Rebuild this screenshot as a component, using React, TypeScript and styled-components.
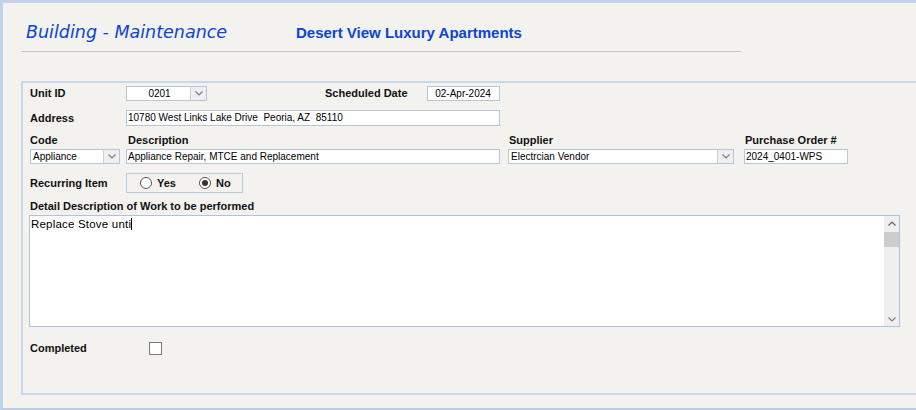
import styled, { createGlobalStyle } from "styled-components";

const GlobalStyle = createGlobalStyle`
  html, body {
    margin: 0;
    padding: 0;
    background: #f3f2ee;
  }
  * {
    box-sizing: border-box;
  }
`;

const Page = styled.div`
  width: 916px;
  height: 410px;
  background: #f3f2ee;
  border-top: 3px solid #c2d4ec;
  border-left: 3px solid #c2d4ec;
  border-bottom: 2px solid #bccde3;
  overflow: hidden;
  font-family: "Liberation Sans", Arial, sans-serif;
  font-size: 11px;
  color: #111;
`;

const Header = styled.div`
  display: flex;
  align-items: baseline;
  padding: 19px 0 0 23px;
  height: 39px;
`;

const Title = styled.div`
  width: 270px;
  font-family: "DejaVu Sans", Verdana, sans-serif;
  font-style: italic;
  font-size: 17.5px;
  line-height: 20px;
  color: #0b44d6;
`;

const Subtitle = styled.div`
  font-weight: bold;
  font-size: 15px;
  line-height: 20px;
  color: #0b44d6;
`;

const Rule = styled.div`
  margin: 9px 0 0 18px;
  width: 720px;
  height: 1px;
  background: #c9c7bd;
`;

const Group = styled.div`
  margin: 29px 0 0 18px;
  width: 920px;
  height: 314px;
  border: 2px solid #c8d7ea;
  padding: 3px 0 0 7px;
`;

const Row = styled.div<{ top?: number }>`
  display: flex;
  align-items: center;
  margin-top: ${(p) => p.top ?? 0}px;
`;

const Label = styled.div<{ w?: number; left?: number }>`
  font-weight: bold;
  font-size: 11px;
  line-height: 13px;
  white-space: nowrap;
  width: ${(p) => (p.w ? `${p.w}px` : "auto")};
  margin-left: ${(p) => p.left ?? 0}px;
`;

const Field = styled.div<{ w: number; h?: number; center?: boolean; left?: number }>`
  width: ${(p) => p.w}px;
  height: ${(p) => p.h ?? 16}px;
  margin-left: ${(p) => p.left ?? 0}px;
  background: #fff;
  border: 1px solid #b4c5dc;
  display: flex;
  align-items: center;
  justify-content: ${(p) => (p.center ? "center" : "flex-start")};
  padding-left: ${(p) => (p.center ? 0 : 1)}px;
  font-size: 10px;
  line-height: 12px;
  color: #000;
  white-space: pre;
  overflow: hidden;
`;

const ComboText = styled.div<{ center?: boolean }>`
  flex: 1;
  text-align: ${(p) => (p.center ? "center" : "left")};
  padding-left: 1px;
`;

const DropButton = styled.div`
  width: 16px;
  height: 100%;
  background: #efefef;
  border-left: 1px solid #d0d0d0;
  display: flex;
  align-items: center;
  justify-content: center;
`;

const Grid = styled.div`
  display: grid;
  grid-template-columns: 96px 382px 236px 104px;
  row-gap: 2px;
  margin-top: 8px;
`;

const RadioGroup = styled.div`
  width: 117px;
  height: 20px;
  border: 1px solid #b9c9de;
  display: flex;
  align-items: center;
  padding-left: 13px;
`;

const RadioItem = styled.div<{ gap?: number }>`
  display: flex;
  align-items: center;
  gap: 5px;
  margin-right: ${(p) => p.gap ?? 0}px;
  font-weight: bold;
`;

const Radio = styled.div<{ checked?: boolean }>`
  width: 12px;
  height: 12px;
  border-radius: 50%;
  border: 1px solid #555;
  background: #fff;
  display: flex;
  align-items: center;
  justify-content: center;

  &::after {
    content: "";
    display: ${(p) => (p.checked ? "block" : "none")};
    width: 6px;
    height: 6px;
    border-radius: 50%;
    background: #333;
  }
`;

const Memo = styled.div`
  margin: 2px 0 0 -1px;
  width: 871px;
  height: 112px;
  background: #fff;
  border: 1px solid #adc2dd;
  display: flex;
`;

const MemoText = styled.div`
  flex: 1;
  padding: 1px 0 0 1px;
  font-size: 11.5px;
  line-height: 14px;
  letter-spacing: 0.2px;
  color: #000;
`;

const Caret = styled.span`
  display: inline-block;
  width: 1px;
  height: 12px;
  background: #000;
  vertical-align: -2px;
`;

const ScrollTrack = styled.div`
  width: 15px;
  background: #efefef;
  display: flex;
  flex-direction: column;
  align-items: center;
`;

const ScrollArrow = styled.div`
  height: 14px;
  width: 100%;
  display: flex;
  align-items: center;
  justify-content: center;
`;

const Thumb = styled.div`
  margin-top: 2px;
  width: 100%;
  height: 15px;
  background: #cdcdcd;
`;

const Spacer = styled.div`
  flex: 1;
`;

const Check = styled.div`
  width: 13px;
  height: 13px;
  border: 1px solid #7a7a7a;
  background: #fff;
`;

function Chevron({ up }: { up?: boolean }) {
  return (
    <svg width="8" height="5" viewBox="0 0 8 5">
      <polyline
        points={up ? "0.5,4.5 4,1 7.5,4.5" : "0.5,0.5 4,4 7.5,0.5"}
        fill="none"
        stroke={up ? "#606060" : "#7d7d7d"}
        strokeWidth="1.2"
      />
    </svg>
  );
}

function Combo({ w, value, center }: { w: number; value: string; center?: boolean }) {
  return (
    <Field w={w} h={15}>
      <ComboText center={center}>{value}</ComboText>
      <DropButton>
        <Chevron />
      </DropButton>
    </Field>
  );
}

export default function App() {
  return (
    <>
      <GlobalStyle />
      <Page>
        <Header>
          <Title>Building - Maintenance</Title>
          <Subtitle>Desert View Luxury Apartments</Subtitle>
        </Header>
        <Rule />

        <Group>
          <Row top={0}>
            <Label w={96}>Unit ID</Label>
            <Combo w={81} value="0201" center />
            <Label left={118}>Scheduled Date</Label>
            <Field w={73} h={15} center left={19}>
              02-Apr-2024
            </Field>
          </Row>

          <Row top={9}>
            <Label w={96}>Address</Label>
            <Field w={374}>10780 West Links Lake Drive  Peoria, AZ  85110</Field>
          </Row>

          <Grid>
            <Label>Code</Label>
            <Label left={2}>Description</Label>
            <Label left={1}>Supplier</Label>
            <Label left={1}>Purchase Order #</Label>
            <Combo w={90} value="Appliance" />
            <Field w={374} h={15}>
              Appliance Repair, MTCE and Replacement
            </Field>
            <Combo w={226} value="Electrcian Vendor" />
            <Field w={104} h={15}>
              2024_0401-WPS
            </Field>
          </Grid>

          <Row top={9}>
            <Label w={96}>Recurring Item</Label>
            <RadioGroup>
              <RadioItem gap={23}>
                <Radio />
                Yes
              </RadioItem>
              <RadioItem>
                <Radio checked />
                No
              </RadioItem>
            </RadioGroup>
          </Row>

          <Row top={7}>
            <Label>Detail Description of Work to be performed</Label>
          </Row>

          <Memo>
            <MemoText>
              Replace Stove unti
              <Caret />
            </MemoText>
            <ScrollTrack>
              <ScrollArrow>
                <Chevron up />
              </ScrollArrow>
              <Thumb />
              <Spacer />
              <ScrollArrow>
                <Chevron />
              </ScrollArrow>
            </ScrollTrack>
          </Memo>

          <Row top={15}>
            <Label w={119}>Completed</Label>
            <Check />
          </Row>
        </Group>
      </Page>
    </>
  );
}
